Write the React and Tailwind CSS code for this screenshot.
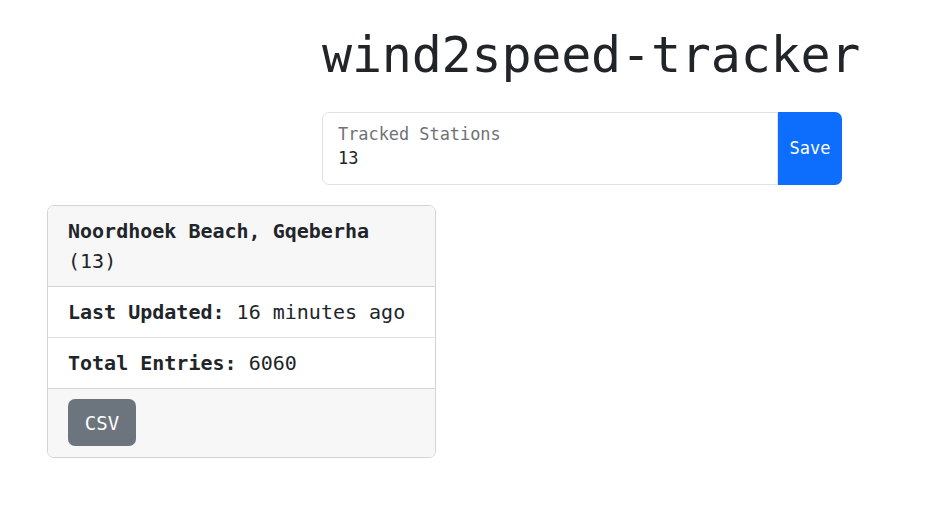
import React, { useState } from "react";

const mono = "font-['DejaVu_Sans_Mono','Liberation_Mono',monospace]";

const StationCard = ({ name, id, updated, entries }) => (
    <div className="w-[389px] rounded-[7px] border border-[#d3d4d5] overflow-hidden text-[20px] leading-[30px] text-[#212529]">
        {/* header */}
        <div className="bg-[#f7f7f7] px-5 py-[10px] border-b border-[#d3d4d5]">
            <div className="font-bold">{name}</div>
            <div>({id})</div>
        </div>
        <div className="px-5 py-[10px] border-b border-[#dee2e6]">
            <span className="font-bold">Last Updated:</span> {updated}
        </div>
        <div className="px-5 py-[10px] border-b border-[#d3d4d5]">
            <span className="font-bold">Total Entries:</span> {entries}
        </div>
        <div className="bg-[#f7f7f7] px-5 pt-[10px] pb-[11px]">
            <button className="bg-[#6c757d] text-white rounded-[7px] h-[47px] w-[68px] text-[19px]">
                CSV
            </button>
        </div>
    </div>
);

const App = () => {
    const [stations, setStations] = useState("13");

    return (
        <div className={`min-h-screen bg-white text-[#212529] ${mono}`}>
            <div className="pl-[322px] pt-[25px]">
                <h1 className="text-[50px] leading-[60px] font-normal tracking-[-0.2px]">wind2speed-tracker</h1>
            </div>

            <div className="pl-[322px] mt-[27px]">
                <div className="flex w-[520px] h-[73px]">
                    <div className="flex-1 border border-[#dee2e6] rounded-l-[7px] px-[15px] pt-[11px]">
                        <div className="text-[16.9px] leading-[20px] text-[#6f7275]">Tracked Stations</div>
                        <input
                            value={stations}
                            onChange={(e) => setStations(e.target.value)}
                            className="w-full outline-none text-[17px] leading-[24px] mt-[2px] bg-transparent"
                        />
                    </div>
                    <button className="w-[64px] bg-[#0d6efd] text-white rounded-r-[7px] text-[17px]">Save</button>
                </div>
            </div>

            <div className="pl-[47px] mt-[20px]">
                <StationCard
                    name="Noordhoek Beach, Gqeberha"
                    id="13"
                    updated="16 minutes ago"
                    entries="6060"
                />
            </div>
        </div>
    );
};

export default App;
